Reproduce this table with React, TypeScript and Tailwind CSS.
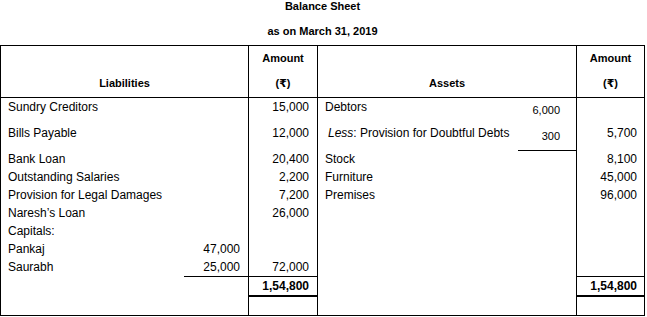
import React from "react";

const font = { fontFamily: '"Liberation Sans", Arial, "DejaVu Sans", sans-serif' };

function Row({ h, children, className = "" }: { h: "26" | "18"; children?: React.ReactNode; className?: string }) {
  return (
    <div className={`${h === "26" ? "h-[26px]" : "h-[18px]"} leading-[18px] whitespace-nowrap ${className}`}>
      {children}
    </div>
  );
}

function AmountHeader() {
  return (
    <div className="h-[52px] border-b border-black flex flex-col items-center pt-[3px] text-[11px] font-bold">
      <div className="leading-[18px]">Amount</div>
      <div className="leading-[18px] mt-[7px]">(₹)</div>
    </div>
  );
}

export default function App() {
  const leftLabels: [string, "26" | "18"][] = [
    ["Sundry Creditors", "26"],
    ["Bills Payable", "26"],
    ["Bank Loan", "18"],
    ["Outstanding Salaries", "18"],
    ["Provision for Legal Damages", "18"],
    ["Naresh\u2019s Loan", "18"],
    ["Capitals:", "18"],
    ["Pankaj", "18"],
    ["Saurabh", "18"],
  ];
  const leftAmounts: [string, "26" | "18"][] = [
    ["15,000", "26"],
    ["12,000", "26"],
    ["20,400", "18"],
    ["2,200", "18"],
    ["7,200", "18"],
    ["26,000", "18"],
    ["", "18"],
    ["", "18"],
    ["72,000", "18"],
  ];
  const rightLabels: [React.ReactNode, "26" | "18", string][] = [
    ["Debtors", "26", "pl-[7px]"],
    [
      <>
        <span className="italic">Less</span>: Provision for Doubtful Debts
      </>,
      "26",
      "pl-[10px]",
    ],
    ["Stock", "18", "pl-[7px]"],
    ["Furniture", "18", "pl-[7px]"],
    ["Premises", "18", "pl-[7px]"],
  ];
  const rightAmounts: [string, "26" | "18"][] = [
    ["", "26"],
    ["5,700", "26"],
    ["8,100", "18"],
    ["45,000", "18"],
    ["96,000", "18"],
  ];

  return (
    <div className="bg-white text-black w-[647px] h-[317px] overflow-hidden" style={font}>
      <div className="w-[645px] text-center text-[11px] font-bold">
        <div className="leading-[13px]">Balance Sheet</div>
        <div className="leading-[13px] mt-[12px]">as on March 31, 2019</div>
      </div>
      <div className="mt-[7px] w-[645px] h-[271px] border border-black flex text-[12px]">
        {/* Liabilities block */}
        <div className="w-[248px] border-r border-black flex flex-col">
          <div className="h-[52px] border-b border-black text-center text-[11px] font-bold pt-[28px] leading-[18px]">
            Liabilities
          </div>
          <div className="flex flex-1">
            <div className="w-[183px] pl-[7px]">
              {leftLabels.map(([t, h]) => (
                <Row key={t} h={h}>
                  {t}
                </Row>
              ))}
            </div>
            <div className="w-[64px] flex flex-col">
              <div className="h-[178px] flex flex-col justify-end text-right pr-[8px]">
                <Row h="18">47,000</Row>
                <Row h="18">25,000</Row>
              </div>
              <div className="flex-1 border-t border-black" />
            </div>
          </div>
        </div>
        {/* Liabilities amount */}
        <div className="w-[69px] border-r border-black flex flex-col">
          <AmountHeader />
          <div className="h-[178px] text-right pr-[8px]">
            {leftAmounts.map(([t, h], i) => (
              <Row key={i} h={h}>
                {t}
              </Row>
            ))}
          </div>
          <div className="h-[21px] border-t border-b-2 border-black text-right pr-[8px] font-bold leading-[18px]">
            1,54,800
          </div>
          <div className="flex-1" />
        </div>
        {/* Assets block */}
        <div className="w-[259px] border-r border-black flex flex-col">
          <div className="h-[52px] border-b border-black text-center text-[11px] font-bold pt-[28px] leading-[18px]">
            Assets
          </div>
          <div className="flex flex-1">
            <div className="w-[200px]">
              {rightLabels.map(([t, h, pl], i) => (
                <Row key={i} h={h} className={pl}>
                  {t}
                </Row>
              ))}
            </div>
            <div className="w-[58px] text-right pr-[16px] text-[11px]">
              <div className="h-[26px] pt-[3px] leading-[18px]">6,000</div>
              <div className="h-[27px] pt-[3px] leading-[18px] border-b border-black -mr-[16px] pr-[16px]">300</div>
            </div>
          </div>
        </div>
        {/* Assets amount */}
        <div className="w-[67px] flex flex-col">
          <AmountHeader />
          <div className="h-[178px] text-right pr-[7px]">
            {rightAmounts.map(([t, h], i) => (
              <Row key={i} h={h}>
                {t}
              </Row>
            ))}
          </div>
          <div className="h-[21px] border-t border-b-2 border-black text-right pr-[7px] font-bold leading-[18px]">
            1,54,800
          </div>
          <div className="flex-1" />
        </div>
      </div>
    </div>
  );
}
